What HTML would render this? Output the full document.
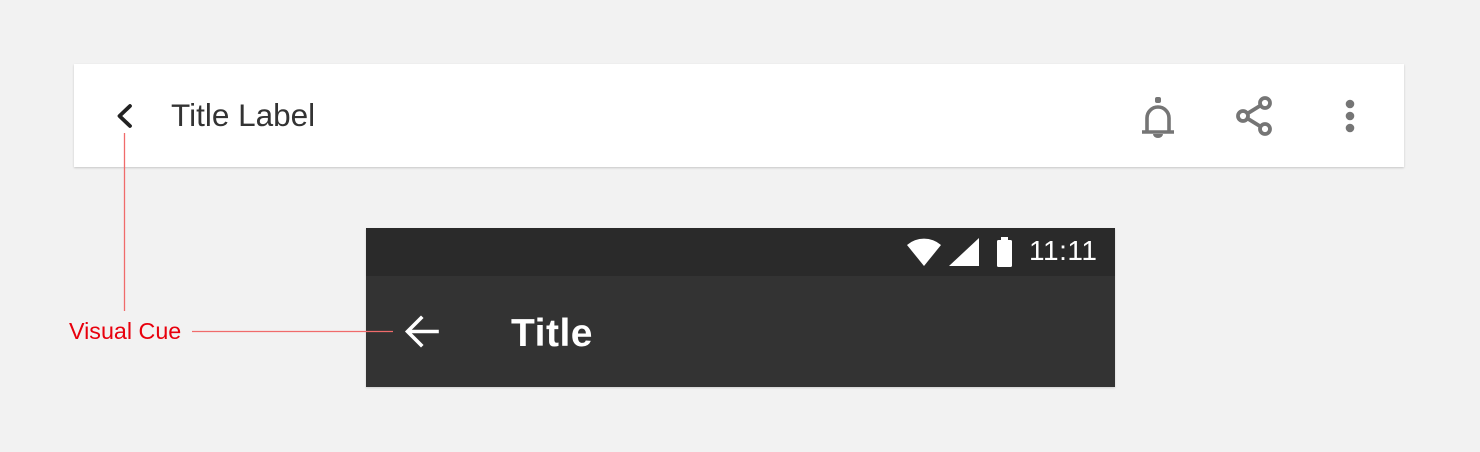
<!DOCTYPE html>
<html><head><meta charset="utf-8"><style>
body{margin:0;width:1480px;height:452px;background:#f2f2f2;position:relative;overflow:hidden;font-family:"Liberation Sans",sans-serif}
.abs{position:absolute}
</style></head><body>
<div class="abs" style="left:74px;top:64px;width:1330px;height:103px;background:#fff;box-shadow:0 1px 2px rgba(0,0,0,.18)"></div>
<div class="abs" style="left:366px;top:228px;width:749px;height:159px;background:#333;box-shadow:0 1px 2px rgba(0,0,0,.15)"></div>
<svg class="abs" style="left:0;top:0" width="1480" height="452">
  <path d="M130 106 L119.5 116 L130 126" fill="none" stroke="#222" stroke-width="3.8" stroke-linecap="round" stroke-linejoin="round"/>
  <g fill="none" stroke="#757575" stroke-width="3.6">
    <path d="M1147 131 V118 a11 11 0 0 1 22 0 V131"/>
    <path d="M1142 132 H1174"/>
  </g>
  <rect x="1155" y="97" width="6" height="6" rx="2" fill="#757575"/>
  <path d="M1153 134 h10 a5 4 0 0 1 -10 0z" fill="#757575"/>
  <g fill="none" stroke="#757575" stroke-width="3.8">
    <circle cx="1265" cy="103" r="5"/><circle cx="1243" cy="116" r="5"/><circle cx="1265" cy="129" r="5"/>
    <path d="M1247.5 113.5 L1260.5 105.5 M1247.5 118.5 L1260.5 126.5"/>
  </g>
  <g fill="#757575"><circle cx="1350" cy="104" r="4.3"/><circle cx="1350" cy="116" r="4.3"/><circle cx="1350" cy="128" r="4.3"/></g>
  <rect x="366" y="228" width="749" height="48" fill="#2a2a2a"/>
  <path d="M124.5 133 V311 M192 331.5 H393" stroke="#f06b6b" stroke-width="1.3"/>
  <path d="M907 245 A26 26 0 0 1 941 245 L924 266 Z" fill="#fff"/>
  <path d="M949 266 L979 238 V266 Z" fill="#fff"/>
  <rect x="1001" y="237" width="7" height="4" fill="#fff"/>
  <rect x="997" y="240" width="15" height="27" rx="1.5" fill="#fff"/>
  <path d="M437 331.5 H409 M421 318 L407.5 331.5 L421 345" fill="none" stroke="#fff" stroke-width="3.6" stroke-linecap="square"/>
</svg>
<div class="abs" style="left:171px;top:95px;font-size:31.5px;color:#333;line-height:40px">Title Label</div>
<div class="abs" style="left:1029px;top:234px;font-size:28px;color:#fff;line-height:34px;letter-spacing:.5px">11:11</div>
<div class="abs" style="left:511px;top:311px;font-size:39px;font-weight:bold;color:#fff;line-height:46px;letter-spacing:.5px">Title</div>
<div class="abs" style="left:69px;top:317px;font-size:23.3px;color:#e8000d;line-height:28px">Visual Cue</div>
</body></html>
